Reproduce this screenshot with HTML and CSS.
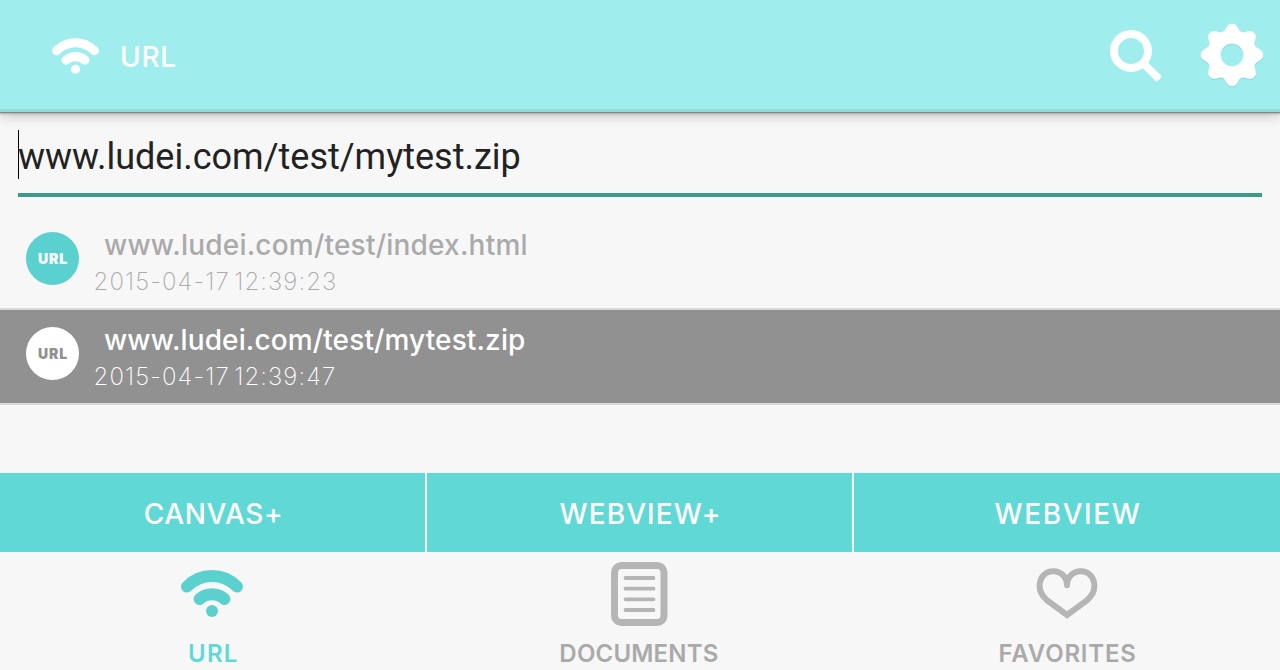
FILE: index.html
```html
<!DOCTYPE html>
<html lang="en">
<head>
<meta charset="utf-8">
<title>URL</title>
<link rel="stylesheet" href="styles.css">
</head>
<body>
<svg class="defs" aria-hidden="true">
  <symbol id="wifi" viewBox="0 0 62 47">
    <path d="M6 16.6A35 35 0 0 1 56 16.6M18.6 29A18.7 18.7 0 0 1 43.4 29" fill="none" stroke="currentColor" stroke-width="12" stroke-linecap="round"/>
    <circle cx="31" cy="41" r="6" fill="currentColor"/>
  </symbol>
</svg>
<div class="app">
  <header class="header">
    <svg class="header-wifi"><use href="#wifi"/></svg>
    <h1 class="title"><span>URL</span></h1>
    <svg class="search" viewBox="0 0 54 54"><circle cx="22" cy="22" r="17" fill="none" stroke="#fff" stroke-width="8"/><path d="M34 34L48.6 48.6" stroke="#fff" stroke-width="7.8"/><path d="M47.5 49.7L49.7 47.5" stroke="#fff" stroke-width="4.8" stroke-linecap="round"/></svg>
    <svg class="gear" viewBox="-32 -32 64 64"><path fill="#fff" fill-rule="evenodd" d="M0-31C6-31 5.7-24.13 9.4-22.6C13.1-21.07 17.68-26.16 21.92-21.92C26.16-17.68 21.07-13.1 22.6-9.4C24.13-5.7 31-6 31 0C31 6 24.13 5.7 22.6 9.4C21.07 13.1 26.16 17.68 21.92 21.92C17.68 26.16 13.1 21.07 9.4 22.6C5.7 24.13 6 31 0 31C-6 31-5.7 24.13-9.4 22.6C-13.1 21.07-17.68 26.16-21.92 21.92C-26.16 17.68-21.07 13.1-22.6 9.4C-24.13 5.7-31 6-31 0C-31-6-24.13-5.7-22.6-9.4C-21.07-13.1-26.16-17.68-21.92-21.92C-17.68-26.16-13.1-21.07-9.4-22.6C-5.7-24.13-6-31 0-31ZM11.6 0A11.6 11.6 0 1 0-11.6 0A11.6 11.6 0 1 0 11.6 0Z" stroke="#fff" stroke-width=".6"/></svg>
  </header>
  <div class="field"><span class="caret"></span><span class="field-text">www.ludei.com/test/mytest.zip</span></div>
  <ul class="list">
    <li class="item">
      <span class="badge">URL</span>
      <div class="info"><div class="link link-a">www.ludei.com/test/index.html</div><div class="date">2015-04-17 12:39:23</div></div>
    </li>
    <li class="item selected">
      <span class="badge">URL</span>
      <div class="info"><div class="link">www.ludei.com/test/mytest.zip</div><div class="date">2015-04-17 12:39:47</div></div>
    </li>
  </ul>
  <div class="actions">
    <div class="action canvas"><span>CANVAS+</span></div>
    <div class="action webview-plus"><span>WEBVIEW+</span></div>
    <div class="action webview"><span>WEBVIEW</span></div>
  </div>
  <nav class="tabs">
    <div class="tab active"><svg class="tab-wifi"><use href="#wifi"/></svg><span>URL</span></div>
    <div class="tab documents"><svg class="tab-doc" viewBox="0 0 57 64"><rect x="3.5" y="3.5" width="49.5" height="57" rx="7" fill="none" stroke="#b5b5b5" stroke-width="7"/><path d="M14.5 16H42.5M14.5 26.7H42.5M14.5 37.3H42.5M14.5 48H42.5" stroke="#b5b5b5" stroke-width="3.8" stroke-linecap="round"/></svg><span>DOCUMENTS</span></div>
    <div class="tab favorites"><svg class="tab-heart" viewBox="0 0 62 51"><path d="M31 17.2C31 9.2 25 3.2 17.4 3.2C9 3.2 3.6 9.8 3.6 18C3.6 24 6.5 28.5 11.5 32.7L31 47L50.5 32.7C55.5 28.5 58.4 24 58.4 18C58.4 9.8 53 3.2 44.6 3.2C37 3.2 31 9.2 31 17.2" fill="none" stroke="#b5b5b5" stroke-width="6" stroke-linecap="round"/></svg><span>FAVORITES</span></div>
  </nav>
</div>
</body>
</html>
```
FILE: styles.css
```css
* { box-sizing: border-box; }
body { margin: 0; background: #f7f7f7; font-family: Inter, "Liberation Sans", sans-serif; }
.defs { display: none; }
.app { width: 1280px; height: 670px; display: flex; flex-direction: column; overflow: hidden; }
svg { display: block; flex: none; }
.header {
  height: 112px; flex: none; display: flex; align-items: flex-start; color: #fff;
  background: #9feeed; border-bottom: 3px solid #8fdcdb;
  box-shadow: 0 1px 0 #858585, 0 2px 2px #aaa, 0 4px 12px rgba(0,0,0,.2);
}
.header-wifi { width: 47px; height: 36px; margin: 38px 0 0 52.4px; }
.title { margin: 40px auto 0 20.5px; font-size: 28px; line-height: 34px; font-weight: 500; letter-spacing: .8px; }
.search { width: 54px; height: 54px; margin: 29px 37px 0 0; }
.gear { width: 64px; height: 64px; margin: 23px 16px 0 0; filter: drop-shadow(0 1px 0 #83d5d4); }
.field {
  height: 68px; flex: none; margin: 17px 18px 0; border-bottom: 4px solid #3a9a8b;
  display: flex; align-items: flex-start;
}
.caret { width: 1px; height: 49px; margin-top: 1px; background: #000; }
.field-text { margin-top: 1px; margin-left: -1px; font: 36px/54px Roboto, sans-serif; color: #222; }
.list { list-style: none; margin: 18px 0 0; padding: 0; flex: 1; }
.item { height: 95px; display: flex; border-bottom: 2px solid #d9d9d9; color: #aaa; }
.badge {
  width: 53px; height: 53px; margin: 17.4px 0 0 26px; border-radius: 50%; background: #5bd1cf; color: #fff;
  font-size: 14px; line-height: 53px; font-weight: 900; text-align: center; letter-spacing: .8px; text-indent: 1px;
}
.info { margin-left: 16px; }
.link { margin: 13px 0 0 9px; font-size: 28px; line-height: 34px; font-weight: 500; letter-spacing: .12px; }
.link-a { letter-spacing: .21px; }
.date { margin: 4px 0 0 -1.5px; font-size: 24px; line-height: 32px; font-weight: 200; letter-spacing: 1.1px; word-spacing: -3.5px; }
.selected { background: #919191; color: #fff; }
.selected .badge { background: #fff; color: #919191; }
.actions { height: 79px; flex: none; display: grid; grid-template-columns: 427px 427px 426px; }
.action {
  background: #60d9d6; border-right: 2px solid #f7f7f7; color: #fff; text-align: center;
  padding: 3px 0 0 2px; font-size: 28px; line-height: 76px; font-weight: 500;
}
.action:last-child { border-right: 0; }
.canvas { letter-spacing: .6px; }
.webview-plus { letter-spacing: 1.1px; }
.webview { letter-spacing: 1.6px; }
.tabs { height: 118px; flex: none; display: grid; grid-template-columns: repeat(3, 1fr); }
.tab { display: grid; grid-template-rows: 86px 32px; justify-items: center; font-size: 24px; line-height: 32px; font-weight: 600; color: #aaa; }
.active { color: #60d9d6; letter-spacing: 1.3px; }
.documents { letter-spacing: .2px; }
.documents span { margin-right: 2px; }
.favorites { letter-spacing: .8px; }
.favorites span { margin-left: 2px; }
.tab-wifi { width: 62px; height: 47px; margin: 18px 3px 0 0; color: #5bd1cf; }
.tab-doc { width: 57px; height: 64px; margin: 10px 1px 0 0; }
.tab-heart { width: 62px; height: 51px; margin-top: 16px; }
```
